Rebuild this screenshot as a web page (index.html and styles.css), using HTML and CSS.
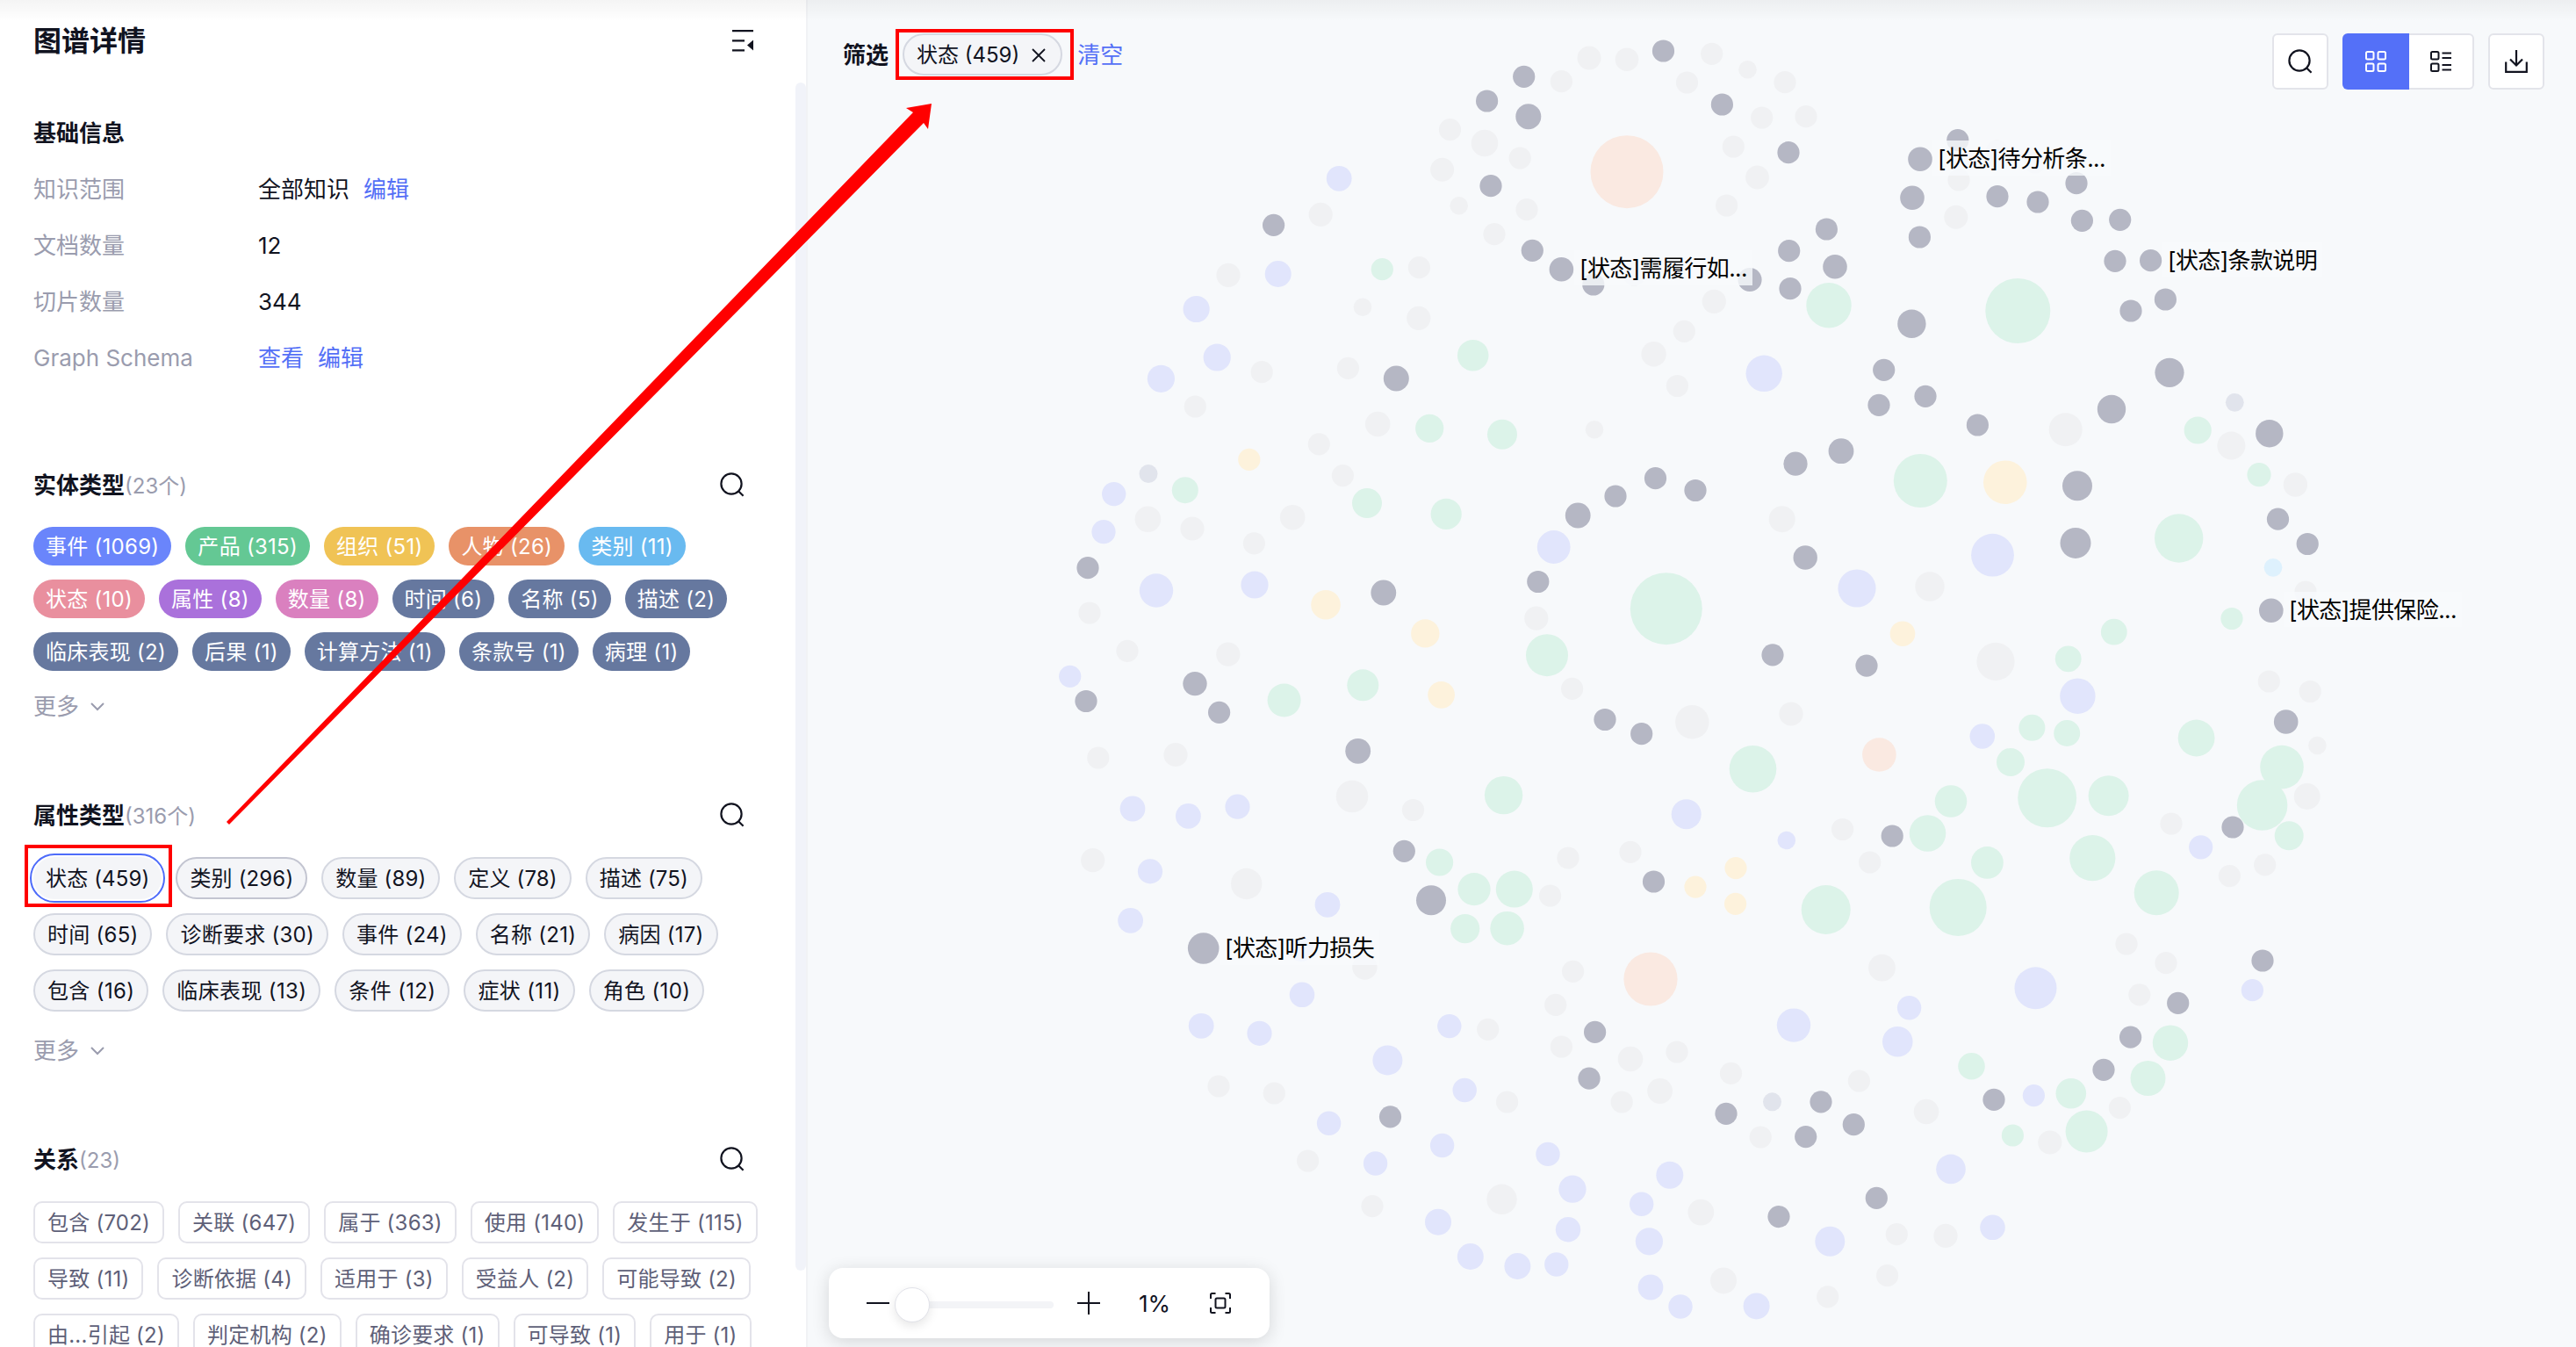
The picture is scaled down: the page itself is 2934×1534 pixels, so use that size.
FILE: index.html
```html
<!DOCTYPE html>
<html lang="zh-CN">
<head>
    <meta charset="UTF-8">
    <meta name="viewport" content="width=device-width, initial-scale=1.0">
    <title>图谱详情</title>
    <link rel="stylesheet" href="styles.css">
</head>
<body>
    <svg class="sprite" aria-hidden="true">
        <symbol id="icon-search" viewBox="0 0 28 28">
            <circle cx="13" cy="13" r="11.6"/>
            <path d="M21 21.2L26.6 26.8"/>
        </symbol>
        <symbol id="icon-down" viewBox="0 0 16 10">
            <path d="M1 1l7 7 7-7"/>
        </symbol>
    </svg>

    <aside class="sidebar">
        <header class="sidebar-header">
            <h1>图谱详情</h1>
            <svg class="collapse" viewBox="0 0 24 25">
                <path d="M0 1.2h24M0 12.3h14M0 23.4h14" stroke="#11131f" stroke-width="2.2"/>
                <path d="M24 11.5v12l-7-6z" fill="#11131f"/>
            </svg>
        </header>

        <section class="info">
            <h2>基础信息</h2>
            <dl>
                <dt>知识范围</dt><dd>全部知识<a>编辑</a></dd>
                <dt>文档数量</dt><dd>12</dd>
                <dt>切片数量</dt><dd>344</dd>
                <dt>Graph Schema</dt><dd><a>查看</a><a>编辑</a></dd>
            </dl>
        </section>

        <section class="group">
            <div class="group-header">
                <h2>实体类型<span>(23个)</span></h2>
                <svg class="icon"><use href="#icon-search"/></svg>
            </div>
            <div class="chips entity">
                <div class="chip-row">
                    <span class="chip event">事件 (1069)</span>
                    <span class="chip product">产品 (315)</span>
                    <span class="chip org">组织 (51)</span>
                    <span class="chip person">人物 (26)</span>
                    <span class="chip category">类别 (11)</span>
                </div>
                <div class="chip-row">
                    <span class="chip status">状态 (10)</span>
                    <span class="chip attr">属性 (8)</span>
                    <span class="chip amount">数量 (8)</span>
                    <span class="chip">时间 (6)</span>
                    <span class="chip">名称 (5)</span>
                    <span class="chip">描述 (2)</span>
                </div>
                <div class="chip-row">
                    <span class="chip">临床表现 (2)</span>
                    <span class="chip">后果 (1)</span>
                    <span class="chip">计算方法 (1)</span>
                    <span class="chip">条款号 (1)</span>
                    <span class="chip">病理 (1)</span>
                </div>
            </div>
            <div class="more">更多<svg><use href="#icon-down"/></svg></div>
        </section>

        <section class="group">
            <div class="group-header">
                <h2>属性类型<span>(316个)</span></h2>
                <svg class="icon"><use href="#icon-search"/></svg>
            </div>
            <div class="chips property">
                <div class="chip-row">
                    <span class="chip selected">状态 (459)</span>
                    <span class="chip hover">类别 (296)</span>
                    <span class="chip">数量 (89)</span>
                    <span class="chip">定义 (78)</span>
                    <span class="chip">描述 (75)</span>
                </div>
                <div class="chip-row">
                    <span class="chip">时间 (65)</span>
                    <span class="chip">诊断要求 (30)</span>
                    <span class="chip">事件 (24)</span>
                    <span class="chip">名称 (21)</span>
                    <span class="chip">病因 (17)</span>
                </div>
                <div class="chip-row">
                    <span class="chip">包含 (16)</span>
                    <span class="chip">临床表现 (13)</span>
                    <span class="chip">条件 (12)</span>
                    <span class="chip">症状 (11)</span>
                    <span class="chip">角色 (10)</span>
                </div>
            </div>
            <div class="more">更多<svg><use href="#icon-down"/></svg></div>
        </section>

        <section class="group">
            <div class="group-header">
                <h2>关系<span>(23)</span></h2>
                <svg class="icon"><use href="#icon-search"/></svg>
            </div>
            <div class="chips relation">
                <div class="chip-row">
                    <span class="chip">包含 (702)</span>
                    <span class="chip">关联 (647)</span>
                    <span class="chip">属于 (363)</span>
                    <span class="chip">使用 (140)</span>
                    <span class="chip">发生于 (115)</span>
                </div>
                <div class="chip-row">
                    <span class="chip">导致 (11)</span>
                    <span class="chip">诊断依据 (4)</span>
                    <span class="chip">适用于 (3)</span>
                    <span class="chip">受益人 (2)</span>
                    <span class="chip">可能导致 (2)</span>
                </div>
                <div class="chip-row">
                    <span class="chip">由...引起 (2)</span>
                    <span class="chip">判定机构 (2)</span>
                    <span class="chip">确诊要求 (1)</span>
                    <span class="chip">可导致 (1)</span>
                    <span class="chip">用于 (1)</span>
                </div>
            </div>
        </section>
        <div class="scrollbar"></div>
    </aside>

    <main class="graph">
        <svg class="nodes" id="nodes" viewBox="920 0 2014 1534"></svg>
        <div class="labels" id="labels"></div>

        <div class="topbar">
            <div class="filter">
                <b>筛选</b>
                <span class="filter-chip">状态 (459)
                    <svg viewBox="0 0 16 16"><path d="M1 1l14 14M15 1L1 15"/></svg>
                </span>
                <a>清空</a>
            </div>
            <div class="tools">
                <button class="tool"><svg class="icon"><use href="#icon-search"/></svg></button>
                <div class="switch">
                    <button class="active">
                        <svg viewBox="0 0 24 24"><rect x="1" y="1" width="8.5" height="8.5" rx="1.5"/><rect x="14.5" y="1" width="8.5" height="8.5" rx="1.5"/><rect x="1" y="14.5" width="8.5" height="8.5" rx="1.5"/><rect x="14.5" y="14.5" width="8.5" height="8.5" rx="1.5"/></svg>
                    </button>
                    <button>
                        <svg viewBox="0 0 24 24"><rect x="1" y="1" width="8.5" height="8.5" rx="1.5"/><rect x="1" y="14.5" width="8.5" height="8.5" rx="1.5"/><path d="M13.5 2.5H24M13.5 8H24M13.5 16H24M13.5 21.5H24"/></svg>
                    </button>
                </div>
                <button class="tool">
                    <svg viewBox="0 0 26 26"><path d="M13 0v17M6 10.5l7 7 7-7M1.2 13.5v11.3h23.6V13.5"/></svg>
                </button>
            </div>
        </div>

        <div class="zoombar">
            <svg class="minus" viewBox="0 0 26 26"><path d="M0 13h26"/></svg>
            <div class="slider"><i></i></div>
            <svg class="plus" viewBox="0 0 26 26"><path d="M0 13h26M13 0v26"/></svg>
            <span>1%</span>
            <svg class="fit" viewBox="0 0 24 24"><path d="M1 7V2.5Q1 1 2.5 1H6.5M17.5 1h4Q23 1 23 2.5V7M23 17v4.5q0 1.500-1.500 1.500h-4M6.500 23h-4Q1 23 1 21.500V17"/><rect x="6.500" y="6.500" width="11" height="11" rx="1.500"/></svg>
        </div>
    </main>

    <div class="top-shadow"></div>
    <div class="mark mark-property"></div>
    <div class="mark mark-filter"></div>
    <svg class="arrow" viewBox="0 0 2934 1534">
        <polygon points="258,936 1040,128 1032,123 1061,118 1057,147 1052,140 261,939"/>
    </svg>

    <script src="graph.js"></script>
</body>
</html>
```
FILE: styles.css
```css
* {
    box-sizing: border-box;
}
body {
    margin: 0;
    width: 2934px;
    height: 1534px;
    display: flex;
    overflow: hidden;
    position: relative;
    background: #f7f9fb;
    color: #11131f;
    font-family: Inter, "Noto Sans CJK SC", sans-serif;
    font-size: 26px;
    line-height: 40px;
}
h1, h2, dl, dd {
    margin: 0;
}
h1 {
    font-size: 32px;
    font-weight: 700;
}
h2 {
    font-size: 26px;
    font-weight: 700;
}
h2 span {
    font-size: 24px;
    font-weight: 400;
    color: #9a9cae;
}
a {
    color: #5470f6;
}
svg {
    display: block;
    flex: none;
    fill: none;
    stroke: #11131f;
    stroke-width: 2.2;
}
button {
    padding: 0;
    border: none;
    background: none;
    display: flex;
    align-items: center;
    justify-content: center;
}
.sprite {
    position: absolute;
    width: 0;
    height: 0;
}
.icon {
    width: 28px;
    height: 28px;
}

/* sidebar */
.sidebar {
    position: relative;
    flex: none;
    width: 920px;
    height: 1534px;
    padding-left: 38px;
    overflow: hidden;
    background: #fff;
    border-right: 2px solid #f1f2f5;
}
.sidebar-header {
    display: flex;
    align-items: center;
    justify-content: space-between;
    height: 94px;
    padding-right: 60px;
}
.collapse {
    width: 24px;
    height: 25px;
    margin-bottom: 2px;
    stroke: none;
}
.info {
    padding-top: 38px;
}
.info dl {
    display: grid;
    grid-template-columns: 256px 1fr;
    row-gap: 24px;
    margin-top: 24px;
}
.info dt {
    color: #9a9cae;
}
.info dd {
    display: flex;
    gap: 16px;
}
.group {
    margin-top: 84px;
}
.info + .group {
    margin-top: 105px;
}
.group-header {
    display: flex;
    align-items: center;
    justify-content: space-between;
    height: 40px;
    padding-right: 70px;
    margin-bottom: 27px;
}
.group-header .icon {
    margin-bottom: 2px;
}
.chips {
    display: flex;
    flex-direction: column;
    gap: 16px;
}
.chip-row {
    display: flex;
    gap: 16px;
}
.chip {
    display: flex;
    align-items: center;
    height: 48px;
    padding: 2px 14px 0;
    border: 2px solid #d5d8e1;
    border-radius: 24px;
    font-size: 24px;
    white-space: nowrap;
}
.entity .chip {
    height: 44px;
    border: none;
    color: #fff;
    background: #66789f;
    letter-spacing: 0.27px;
}
.entity .event { background: #6a85fb; }
.entity .product { background: #64c894; }
.entity .org { background: #f0c355; }
.entity .person { background: #e89268; }
.entity .category { background: #69baf0; }
.entity .status { background: #e98f9e; }
.entity .attr { background: #aa71db; }
.entity .amount { background: #da80bf; }
.property .chip {
    background: #f4f5f8;
    letter-spacing: 0.15px;
}
.property .chip-row:nth-child(2) .chip {
    letter-spacing: 0.25px;
}
.property .chip-row:nth-child(3) .chip {
    letter-spacing: 0.35px;
}
.property .hover {
    border-color: #c3c5d1;
}
.property .selected {
    padding: 2px 12px 0;
    border-color: #f4f5f8;
    outline: 2px solid #4d6bfa;
    outline-offset: 2px;
}
.relation .chip {
    color: #5e6078;
    border-color: #e3e3ea;
    border-radius: 10px;
    letter-spacing: 0.23px;
}
.more {
    display: flex;
    align-items: center;
    gap: 13px;
    height: 40px;
    margin-top: 21px;
    color: #9a9cae;
}
.property + .more {
    margin-top: 25px;
}
.more svg {
    width: 16px;
    height: 10px;
    stroke: #9a9cae;
    stroke-width: 2;
}
.scrollbar {
    position: absolute;
    top: 94px;
    right: 0;
    width: 12px;
    height: 1353px;
    border-radius: 6px;
    background: #f1f3f9;
}

/* graph canvas */
.graph {
    position: relative;
    flex: 1;
}
.nodes {
    position: absolute;
    inset: 0;
    width: 2014px;
    height: 1534px;
    stroke: none;
}
.entity-none { fill: #f0f1f3; }
.match { fill: #b5b7c4; }
.blue { fill: #e1e5fc; }
.green { fill: #dcf3e9; }
.yellow { fill: #fdf2dc; }
.orange { fill: #fae9e1; }
.slate { fill: #e1e4ec; }
.sky { fill: #def1fd; }
.node-label {
    position: absolute;
    height: 40px;
    padding: 1px 6px 0;
    color: #000;
    background: rgba(248, 250, 252, 0.8);
    letter-spacing: -0.6px;
    white-space: nowrap;
}
.topbar {
    position: relative;
    display: flex;
    justify-content: space-between;
    padding: 38px 36px 0 40px;
}
.filter {
    display: flex;
    align-items: center;
    height: 50px;
}
.filter-chip {
    display: flex;
    align-items: center;
    gap: 14px;
    height: 48px;
    margin: -2px 17px 0 16px;
    padding: 2px 17px 0 14px;
    border: 2px solid #d5d8e1;
    border-radius: 24px;
    background: #f4f5f8;
    font-size: 24px;
}
.filter-chip svg {
    width: 16px;
    height: 16px;
    stroke-width: 1.8;
}
.tools {
    display: flex;
    gap: 16px;
}
.tool {
    width: 64px;
    height: 64px;
    border: 2px solid #e3e4ea;
    border-radius: 6px;
    background: #fff;
}
.tool svg:not(.icon) {
    width: 26px;
    height: 26px;
}
.switch {
    display: flex;
    height: 64px;
}
.switch button {
    width: 74px;
    border: 2px solid #e3e4ea;
    border-left: none;
    border-radius: 0 6px 6px 0;
    background: #fff;
}
.switch .active {
    width: 76px;
    border: none;
    border-radius: 6px 0 0 6px;
    background: #5470f8;
}
.switch svg {
    width: 24px;
    height: 24px;
    stroke-width: 2;
}
.switch .active svg {
    stroke: #fff;
}
.zoombar {
    position: absolute;
    left: 24px;
    bottom: 10px;
    display: flex;
    align-items: center;
    width: 502px;
    height: 80px;
    padding-left: 43px;
    border-radius: 16px;
    background: #fff;
    box-shadow: 0 4px 20px rgba(0, 0, 0, 0.14);
}
.zoombar svg {
    width: 26px;
    height: 26px;
    stroke-width: 2;
}
.slider {
    width: 181px;
    height: 8px;
    margin: 4px 27px 0 6px;
    border-radius: 4px;
    background: #f3f4f7;
    display: flex;
    align-items: center;
}
.slider i {
    width: 40px;
    height: 40px;
    border: 1px solid #e1e2e9;
    border-radius: 50%;
    background: #fff;
    box-shadow: 0 4px 12px rgba(0, 0, 0, 0.1);
}
.zoombar span {
    width: 80px;
    padding: 2px 0 0 44px;
    margin-right: 45px;
}
.zoombar .fit {
    width: 24px;
    height: 24px;
}

/* overlays */
.top-shadow {
    position: absolute;
    top: 0;
    left: 0;
    right: 0;
    height: 24px;
    background: linear-gradient(rgba(0, 0, 0, 0.045), rgba(0, 0, 0, 0));
}
.mark {
    position: absolute;
    border: 4px solid #f00;
}
.mark-property {
    left: 28px;
    top: 962px;
    width: 168px;
    height: 71px;
}
.mark-filter {
    left: 1020px;
    top: 33px;
    width: 203px;
    height: 58px;
}
.arrow {
    position: absolute;
    inset: 0;
    width: 2934px;
    height: 1534px;
    fill: #f00;
    stroke: none;
}
```
FILE: graph.js
```js
// [x, y, r], r defaults to 12.6
const NODES = {
    'entity-none': [
        [1810,66,13.5],[1853,67.7,13.3],[1778.4,92.7],[1921.5,94],[1651.5,147.7],[1691,163,15.3],[1731.2,180],[1642.6,193.3,13.5],
        [1661.7,234.3,10.3],[1739,238.7],[1702,266.7],[1504.2,244.3,13.6],[1399,313.3,13.6],[1616.4,304.7],[1552,349.7,10.3],[1615.8,362.3,13.6],
        [1437.2,423.7],[1535.4,419.3],[1361.3,463],[1569.2,483,14.3],[1816,489.3,10.3],[1883.6,403.3,14.2],[1918.3,377.3],[1910.4,439.5],
        [1502.3,505.8],[1861.3,313],[1949.7,61.3],[1990.5,79.3,10.3],[2033,93.7],[2006.7,134],[2057,132.7],[1974.3,167],
        [2001.5,202,13.4],[1966.6,234],[1952.3,343.3,13.6],[2274.4,172],[2317.7,185],[2231,205],[2227.8,247.3,13.5],[2352.7,489.3,19],
        [2541.4,507.5,16],[1529.4,541.6],[1307.4,591.2,14.8],[1358,602,13.6],[1472.2,589.2,14.3],[1428.4,618.8],[1241,698],[1284,741.4],
        [1398.8,745.2,13.6],[1250.8,863],[1339,859.5,13.6],[1540,907,18.3],[1609.5,922.5],[1244.7,979.7,13.6],[1419.7,1006.5,17.7],[1749.8,704.2,13.6],
        [1790.6,784.4],[1927.3,822.3,19.2],[1786,977],[1857,970.4],[1765.6,1020],[2029.7,591.2,15],[2198,668,16.7],[2273,753.4,21.6],
        [2040,813,13.6],[2614.4,552,13.7],[2626,674],[2584.3,776],[2631.2,787.5],[2639.4,849,10.3],[2627.7,907,15],[2473,938],
        [2579.7,984.8],[2539.4,997.6],[2098.6,944.5],[2129.7,982],[1554.4,1101.5,14.2],[1791.6,1106.3],[1771.7,1144.4],[1694.7,1172.3],
        [1778.4,1192],[1857,1206,14.3],[1910,1198],[1388,1237],[1451.3,1245],[1716.6,1255],[1890.6,1242.5,14.4],[1847.2,1255],
        [1489.6,1322],[1563,1373.6],[1710.5,1365.8,17.2],[1937.3,1380.6,14.9],[2143.5,1102.2,15.4],[2422,1075],[2467,1096.7],[2436.8,1132.8],
        [1971.5,1222.4],[2117.4,1231],[2005.2,1295],[2194,1266,14.3],[2414.4,1261.6],[2334.8,1301,13.6],[2160.3,1405.7],[2216,1407.4,13.6],
        [2149.6,1452.7],[2081.7,1476.8],[1963,1458.4,15]
    ],
    blue: [
        [1525.2,203.3,14.4],[1455.7,312,15],[1362.6,352,15.1],[1386.2,407,15.6],[1322.4,431.3,15.6],[2009.2,425.3,20.7],[1268.7,562.6,13.7],[1257,605.7,13.6],
        [1317,672.5,19.2],[1429,666,15.6],[1218.7,770.3],[1290,921,14.4],[1353.4,929.4,14.4],[1409.5,918.7,14.1],[1310,992.4,14.1],[1769.7,623,18.9],
        [1920.7,927.3,17],[2115,670,21.6],[2269.5,632.2,24.4],[2366.4,792.7,20.2],[2257.8,838.5,14.3],[2034.8,957,10.3],[2506.7,964.8,13.6],[1482,1081,14],
        [1287.6,1048.4,14.4],[1512,1030.3,14.4],[1483,1132.8,14.3],[1368.2,1168.3,14.4],[1434.5,1176.8,14.1],[1650.8,1168.6,13.7],[1580.4,1207.4,17],[1668.2,1241.5,13.7],
        [1513.6,1279.3,13.7],[1566.6,1325,13.7],[1642.6,1304.5,13.7],[1763,1314.4,13.7],[1791,1354.2,15.6],[1786,1400.2,14.2],[1772.8,1440,13.7],[1638,1391.7,15],
        [1674.8,1431,15],[1728.4,1442,15],[1901.8,1338.2,15.5],[1869.7,1371.3,13.7],[1878.4,1413.8,15.6],[1880,1466,14.4],[1914,1488,13.7],[2318.5,1125.3,24],
        [2174.6,1147.8,13.7],[2043,1167.6,19.2],[2161.3,1186.3,17.3],[2565.4,1127.7],[2316.4,1247.6],[2222,1331.4,16.8],[2269.5,1397.8,14.3],[2084.3,1413.8,17],
        [2000.6,1487.4,15]
    ],
    green: [
        [1574.3,306.7],[1677.7,404.7,17.8],[1628.2,487.8,16.1],[1711,494.7,17],[2083,347.7,25.7],[2298.3,354,37],[2503.2,490,15.6],[1349.8,558.2,15],
        [1557,573,17],[1647.2,585.4,17.6],[1552.3,780.3,18],[1462.6,797.5,19],[1762,746.2,24],[1897.8,693.2,41],[1712.6,905.6,21.7],[1639.6,982,15.6],
        [1679,1012.6,18.6],[1724.8,1012.6,21],[2187.3,547.5,30.5],[2481.7,613,27.7],[2573,540.6,13.6],[2542,704.5],[2407.8,719.7,14.9],[2355.7,750.3,14.9],
        [2314.4,828.8,15],[2354.2,835,15],[2290,868,16],[2501.6,840.5,20.9],[1996.5,875.7,26.8],[2331.7,908.7,33.5],[2401.6,906.3,23],[2599,873.6,24.8],
        [2576.6,917,28.8],[2607.2,951.8,16.5],[2222,912.5,18.3],[2195.5,949,20.8],[2263.4,982.4,18.4],[2383.3,977.2,26.1],[2456.2,1016.8,25.5],[2079.7,1036,28],
        [2230.2,1033.4,32.5],[1668.7,1057.6,16.6],[1716.6,1057.2,19.3],[2245.5,1214.2,15.3],[2358.8,1245.2,17.3],[2376.6,1288.5,24],[2292.4,1293],[2446.5,1228,20],
        [2472,1187.7,20.2]
    ],
    yellow: [
        [1422.8,523.4],[1510,688.7,16.8],[1623.3,721.4,16.2],[1641.6,791.3,15.4],[1931,1010.2],[2283.8,549.2,24.8],[2167,721.7,14.3],[1977,988.6],
        [1976.6,1029.3]
    ],
    orange: [[1853,195.7,41.5],[2140.4,859.5,19.3],[1880,1115,30.6]],
    slate: [[2545.3,458.3,10.4],[1308,539.6,10.5],[2018.5,1254.8,10.5]],
    sky: [[2589,646.3,10.4]],
    match: [
        [1894.5,58],[1735.7,87.3],[1693.6,115],[1740.8,132.7,14.5],[1698,211.7],[1450.6,256.3],[1745.3,285.3],[1778.4,306.7,13.8],
        [1814.8,324],[1590.3,431,14.5],[1961.4,119],[2037,173.7],[2229.8,159.7],[2187,181.3,13.8],[2178,225.3,13.8],[2186.4,270],
        [2275,223.7],[2321,230],[2365,208.7],[2371.4,251.3],[2414.7,250.3],[2409,297.3],[2449.6,296.7],[2466.4,341],
        [2427,354],[2080.4,261],[2037.7,285.7],[2090,303.7,13.8],[2039,328.7],[1993,318.5,13.6],[2177.4,368.7,16.2],[2471,424.3,16.6],
        [2405,466,16.2],[2145.7,421.3],[2140,461.3],[2193,451.3],[2252.4,484],[2584.8,493.7,15.7],[1239,646.7],[1237,798.5],
        [1361,778.6,13.7],[1388.6,811.3],[1575.8,675,14.4],[1546.7,855.3,14.4],[1599.3,969.3],[1797.2,587,14.4],[1840,565],[1885.5,544.7],
        [1931,558.5],[1751.8,662.5],[1828,819.5],[1869.7,835.7],[1883.5,1004],[1630,1025.2,17],[2045,528.2,13.6],[2097,513.7,14.4],
        [2056.2,635,13.7],[2019,745.8],[2126,758.2],[2366,553.3,17],[2364,618.4,17.5],[2594.5,591.2],[2628.2,619.5],[2586.8,695.2,13.8],
        [2603.7,822,13.8],[2155.2,952],[2543,942],[1370.7,1080,17.8],[1816.6,1175.4],[1810,1228.2],[1583.5,1271.8],[1966,1268.4],
        [2074,1254.8],[2056.7,1294.6],[2111.3,1280.7],[2271,1252.4],[2396,1218.3],[2426.6,1181.2],[2480.7,1142.4],[2577,1094],
        [2026,1385.6],[2137.3,1364.4]
    ]
};

const LABELS = [
    [1793, 285, '[状态]需履行如...'],
    [2201, 160, '[状态]待分析条...'],
    [2463, 276, '[状态]条款说明'],
    [2601, 674, '[状态]提供保险...'],
    [1389, 1059, '[状态]听力损失']
];

const svg = document.getElementById('nodes');
for (const kind in NODES) {
    NODES[kind].forEach(([x, y, r = 12.6]) => {
        const circle = document.createElementNS('http://www.w3.org/2000/svg', 'circle');
        circle.setAttribute('cx', x);
        circle.setAttribute('cy', y);
        circle.setAttribute('r', r);
        circle.setAttribute('class', kind);
        svg.appendChild(circle);
    });
}

const labels = document.getElementById('labels');
LABELS.forEach(([x, y, text]) => {
    const el = document.createElement('span');
    el.className = 'node-label';
    el.style.left = (x - 920) + 'px';
    el.style.top = y + 'px';
    el.textContent = text;
    labels.appendChild(el);
});
```
